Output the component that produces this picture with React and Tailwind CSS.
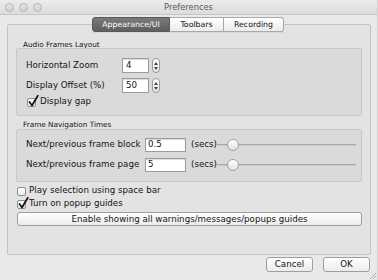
import React from "react";

function Stepper() {
  return (
    <div className="w-[8px] h-[15px] rounded-[4px] border border-[#9a9a9a] bg-gradient-to-b from-[#ffffff] to-[#e6e6e6] flex flex-col items-center justify-center gap-[2px]">
      <svg width="4" height="3" viewBox="0 0 4 3"><path d="M0 3 L2 0 L4 3 Z" fill="#444" /></svg>
      <svg width="4" height="3" viewBox="0 0 4 3"><path d="M0 0 L2 3 L4 0 Z" fill="#444" /></svg>
    </div>
  );
}

function Checkbox({ checked }) {
  return (
    <div className="relative w-[9px] h-[9px] rounded-[2px] border border-[#8e8e8e] bg-gradient-to-b from-[#ffffff] to-[#ececec] shrink-0">
      {checked && (
        <svg className="absolute left-[0px] top-[-4px]" width="11" height="12" viewBox="0 0 11 12">
          <path d="M1.5 7 L4 10.5 L9.8 0.8" stroke="#111" strokeWidth="1.7" fill="none" strokeLinecap="round" strokeLinejoin="round" />
        </svg>
      )}
    </div>
  );
}

function Slider() {
  return (
    <div className="relative w-[139px] h-[14px] flex items-center">
      <div className="w-full h-[2px] rounded-full bg-[#a9a9a9] border-b border-[#c9c9c9]" />
      <div className="absolute left-[10px] top-[1px] w-[12px] h-[12px] rounded-full border border-[#a0a0a0] bg-gradient-to-b from-[#ffffff] to-[#e2e2e2]" />
    </div>
  );
}

function Light() {
  return <div className="w-[9px] h-[9px] rounded-full border border-[#b3b3b3] bg-gradient-to-b from-[#e4e4e4] to-[#d2d2d2]" />;
}

export default function App() {
  return (
    <div className="relative w-[378px] h-[280px] overflow-hidden bg-[#e9e9e9] text-[#141414] font-['DejaVu_Sans',sans-serif] border-r border-[#d2d2d2]">
      {/* title bar */}
      <div className="relative h-[15px] bg-gradient-to-b from-[#ececec] to-[#dcdcdc] border-b border-[#c6c6c6] flex items-center pl-[5px] gap-[5px]">
        <Light />
        <Light />
        <Light />
        <div className="absolute inset-0 flex items-center justify-center text-[8.3px] text-[#5a5a5a] leading-none">Preferences</div>
      </div>

      {/* tab panel */}
      <div className="relative mt-[9px] ml-[7px] w-[364px] h-[231px] border border-[#c3c3c3] rounded-[2px] bg-[#e3e3e3] px-[8px] pt-[15px] flex flex-col">
        {/* tabs */}
        <div className="absolute left-[84px] top-[-8px] h-[15px] flex text-[7.8px] leading-none shadow-[0_1px_0_rgba(0,0,0,0.05)]">
          <div className="w-[78px] h-full flex items-center justify-center rounded-l-[3px] bg-gradient-to-b from-[#7a7a7a] to-[#5e5e5e] text-white border border-[#595959]">Appearance/UI</div>
          <div className="w-[54px] h-full flex items-center justify-center bg-gradient-to-b from-[#ffffff] to-[#ececec] border-y border-r border-[#a8a8a8] text-[#111]">Toolbars</div>
          <div className="w-[60px] h-full flex items-center justify-center rounded-r-[3px] bg-gradient-to-b from-[#ffffff] to-[#ececec] border-y border-r border-[#a8a8a8] text-[#111]">Recording</div>
        </div>

        {/* group 1 */}
        <div className="h-[8px] pl-[7px] text-[7.3px] leading-[9px]">Audio Frames Layout</div>
        <div className="h-[68px] border border-[#c8c8c8] rounded-[2px] bg-[#dadada] pl-[9px] pt-[9px] flex flex-col text-[8.7px]">
          <div className="h-[15px] flex items-center">
            <div className="w-[96px]">Horizontal Zoom</div>
            <div className="w-[27px] h-[15px] bg-white border border-[#9c9c9c] shadow-[inset_0_1px_1px_rgba(0,0,0,0.15)] flex items-center pl-[3px]">4</div>
            <div className="ml-[3px]"><Stepper /></div>
          </div>
          <div className="h-[15px] mt-[5px] flex items-center">
            <div className="w-[96px]">Display Offset (%)</div>
            <div className="w-[27px] h-[15px] bg-white border border-[#9c9c9c] shadow-[inset_0_1px_1px_rgba(0,0,0,0.15)] flex items-center pl-[3px]">50</div>
            <div className="ml-[3px]"><Stepper /></div>
          </div>
          <div className="h-[12px] mt-[3px] flex items-center gap-[4px] pl-[1px]">
            <Checkbox checked />
            <span>Display gap</span>
          </div>
        </div>

        {/* group 2 */}
        <div className="h-[13px] pt-[4px] pl-[7px] text-[7.3px] leading-[9px]">Frame Navigation Times</div>
        <div className="h-[53px] border border-[#c8c8c8] rounded-[2px] bg-[#dadada] pl-[9px] pt-[8px] flex flex-col text-[8.7px]">
          <div className="h-[14px] flex items-center">
            <div className="w-[119px]">Next/previous frame block</div>
            <div className="w-[41px] h-[14px] bg-white border border-[#9c9c9c] shadow-[inset_0_1px_1px_rgba(0,0,0,0.15)] flex items-center pl-[2px]">0.5</div>
            <div className="ml-[5px] w-[26px]">(secs)</div>
            <Slider />
          </div>
          <div className="h-[14px] mt-[6px] flex items-center">
            <div className="w-[119px]">Next/previous frame page</div>
            <div className="w-[41px] h-[14px] bg-white border border-[#9c9c9c] shadow-[inset_0_1px_1px_rgba(0,0,0,0.15)] flex items-center pl-[2px]">5</div>
            <div className="ml-[5px] w-[26px]">(secs)</div>
            <Slider />
          </div>
        </div>

        {/* checkboxes */}
        <div className="mt-[3px] h-[12px] flex items-center gap-[3px] pl-[1px] text-[8.7px]">
          <Checkbox />
          <span>Play selection using space bar</span>
        </div>
        <div className="mt-[1px] h-[12px] flex items-center gap-[3px] pl-[1px] text-[8.7px]">
          <Checkbox checked />
          <span>Turn on popup guides</span>
        </div>
        <div className="mt-[2px] ml-[1px] w-[345px] h-[14px] rounded-[3px] border border-[#9e9e9e] bg-gradient-to-b from-[#ffffff] to-[#ececec] flex items-center justify-center text-[8.7px] leading-none">
          Enable showing all warnings/messages/popups guides
        </div>
      </div>

      {/* bottom buttons */}
      <div className="mt-[2px] flex justify-end pr-[7px] gap-[10px] text-[8.7px]">
        <div className="w-[47px] h-[15px] rounded-[3px] border border-[#9e9e9e] bg-gradient-to-b from-[#ffffff] to-[#ececec] flex items-center justify-center leading-none">Cancel</div>
        <div className="w-[47px] h-[15px] rounded-[3px] border border-[#9e9e9e] bg-gradient-to-b from-[#ffffff] to-[#ececec] flex items-center justify-center leading-none">OK</div>
      </div>

      {/* resize grip */}
      <svg className="absolute right-[1px] bottom-[1px]" width="7" height="7" viewBox="0 0 7 7">
        <path d="M7 1 L1 7 M7 4 L4 7" stroke="#9a9a9a" strokeWidth="0.8" />
      </svg>
    </div>
  );
}
